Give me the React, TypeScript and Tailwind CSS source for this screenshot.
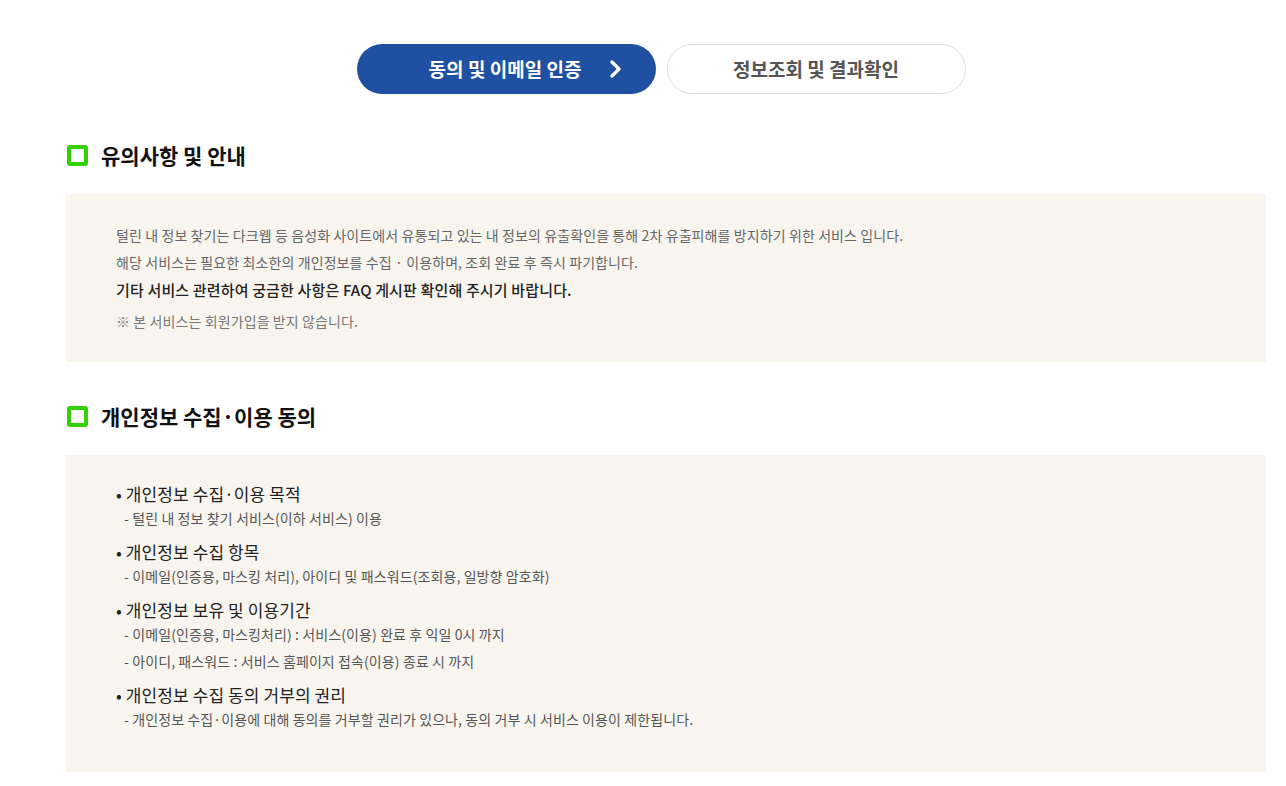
import React from "react";

const font = { fontFamily: '"Noto Sans CJK KR", "Noto Sans", sans-serif' };

const SectionTitle = ({ label }: { label: string }) => (
  <div className="flex items-center gap-[13px] pl-[67px]">
    <span className="block h-[21px] w-[21px] rounded-[3px] border-4 border-[#33d100]" />
    <h2 className="text-[21px] font-bold leading-none text-[#111]">{label}</h2>
  </div>
);

const purposes = [
  { title: "개인정보 수집·이용 목적", lines: ["- 털린 내 정보 찾기 서비스(이하 서비스) 이용"] },
  { title: "개인정보 수집 항목", lines: ["- 이메일(인증용, 마스킹 처리), 아이디 및 패스워드(조회용, 일방향 암호화)"] },
  {
    title: "개인정보 보유 및 이용기간",
    lines: [
      "- 이메일(인증용, 마스킹처리) : 서비스(이용) 완료 후 익일 0시 까지",
      "- 아이디, 패스워드 : 서비스 홈페이지 접속(이용) 종료 시 까지",
    ],
  },
  {
    title: "개인정보 수집 동의 거부의 권리",
    lines: ["- 개인정보 수집·이용에 대해 동의를 거부할 권리가 있으나, 동의 거부 시 서비스 이용이 제한됩니다."],
  },
];

export default function App() {
  return (
    <div className="min-h-[786px] w-[1286px] bg-white" style={font}>
      <div className="flex justify-center gap-[11px] pt-[44px] pl-[36px]">
        <button className="flex h-[50px] w-[299px] items-center justify-center gap-[28px] rounded-full bg-[#1f50a2] pl-[40px] text-[19px] font-bold text-white">
          <span>동의 및 이메일 인증</span>
          <svg width="14" height="18" viewBox="0 0 14 18" fill="none">
            <path d="M3 2l7 7-7 7" stroke="white" strokeWidth="3.2" strokeLinecap="round" strokeLinejoin="round" />
          </svg>
        </button>
        <button className="flex h-[50px] w-[299px] items-center justify-center rounded-full border border-[#dcdcdc] bg-white text-[19px] font-bold text-[#555]">
          정보조회 및 결과확인
        </button>
      </div>

      <div className="mt-[51px]">
        <SectionTitle label="유의사항 및 안내" />
        <div className="ml-[66px] mr-[20px] mt-[28px] bg-[#f8f5ef] pl-[50px] pt-[28px] pb-[27px]">
          <p className="text-[14px] leading-[27px] tracking-[0.1px] text-[#666]">
            털린 내 정보 찾기는 다크웹 등 음성화 사이트에서 유통되고 있는 내 정보의 유출확인을 통해 2차 유출피해를 방지하기 위한 서비스 입니다.
          </p>
          <p className="text-[14px] leading-[27px] tracking-[0.1px] text-[#666]">
            해당 서비스는 필요한 최소한의 개인정보를 수집 · 이용하며, 조회 완료 후 즉시 파기합니다.
          </p>
          <p className="text-[15px] font-medium leading-[27px] tracking-[0.15px] text-[#222]">
            기타 서비스 관련하여 궁금한 사항은 FAQ 게시판 확인해 주시기 바랍니다.
          </p>
          <p className="mt-[5px] text-[14px] leading-[27px] tracking-[0.1px] text-[#777]">
            ※ 본 서비스는 회원가입을 받지 않습니다.
          </p>
        </div>
      </div>

      <div className="mt-[44px]">
        <SectionTitle label="개인정보 수집·이용 동의" />
        <div className="ml-[66px] mr-[20px] mt-[28px] flex flex-col gap-[9px] bg-[#f8f5ef] pl-[50px] pt-[28px] pb-[39px]">
          {purposes.map((p) => (
            <div key={p.title}>
              <p className="text-[17px] leading-[22px] tracking-[0.1px] text-[#222]">• {p.title}</p>
              {p.lines.map((l) => (
                <p key={l} className="pl-[8px] text-[14px] leading-[27px] tracking-[0.1px] text-[#555]">
                  {l}
                </p>
              ))}
            </div>
          ))}
        </div>
      </div>
    </div>
  );
}
